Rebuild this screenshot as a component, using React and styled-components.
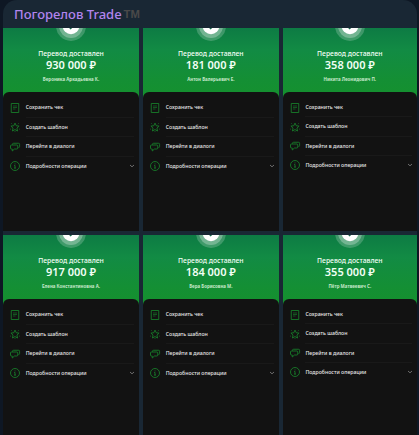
import React from "react";
import styled, { createGlobalStyle } from "styled-components";

const transfers = [
  { amount: "930 000 ₽", name: "Вероника Аркадьевна К." },
  { amount: "181 000 ₽", name: "Антон Валерьевич Е." },
  { amount: "358 000 ₽", name: "Никита Леонидович П.", compact: true },
  { amount: "917 000 ₽", name: "Елена Константиновна А." },
  { amount: "184 000 ₽", name: "Вера Борисовна М." },
  { amount: "355 000 ₽", name: "Пётр Матвеевич С.", compact: true },
];

const ReceiptIcon = () => (
  <Icon viewBox="0 0 20 20">
    <path d="M2.5 1h15v18h-15z" />
    <path d="M6 6h8M6 9h8M6 12h5" strokeWidth="1.2" />
  </Icon>
);

const StarIcon = () => (
  <Icon viewBox="0 0 20 20">
    <path d="M10 2.200l2.500 5.300 5.700.7-4.300 4 1.200 5.800-5.100-2.900L4.900 18l1.200-5.800-4.300-4 5.700-.7z" />
    <path d="M2.500 2.500l1.800 1.800M17.500 2.500l-1.800 1.800M.2 14.500l1.800-.6M19.800 14.500l-1.800-.6M10 18.200v1.800" strokeWidth="1.300" />
  </Icon>
);

const ChatIcon = () => (
  <Icon viewBox="0 0 20 20">
    <path d="M5 5.500V4.500q0-2 2-2h10q2.200 0 2.200 2.200V9q0 2-2.200 2.200" />
    <path d="M3 6h10.500q2 0 2 2v4q0 2-2 2H9l-4.500 4v-4H3q-2 0-2-2V8q0-2 2-2z" />
  </Icon>
);

const InfoIcon = () => (
  <Icon viewBox="0 0 20 20">
    <circle cx="10" cy="10" r="9" />
    <path d="M10 5v1.800M8.300 9H10v5M8 14.200h4" strokeWidth="1.700" />
  </Icon>
);

const actions = [
  { label: "Сохранить чек", icon: ReceiptIcon },
  { label: "Создать шаблон", icon: StarIcon },
  { label: "Перейти в диалоги", icon: ChatIcon },
  { label: "Подробности операции", icon: InfoIcon, expandable: true },
];

const Transfer = ({ amount, name, compact }) => (
  <Card>
    <Hero>
      <Badge viewBox="0 0 30 14">
        <circle cx="15" cy="-2" r="15" fill="#fff" fillOpacity=".2" />
        <circle cx="15" cy="-2" r="12" fill="#fff" fillOpacity=".28" />
        <circle cx="15" cy="-2" r="8.300" fill="#fff" />
        <path d="M12.800-1.500L14.600.5l2-2" fill="none" stroke="#14664a" strokeWidth="1.500" />
      </Badge>
      <Status>Перевод доставлен</Status>
      <Amount>{amount}</Amount>
      <Recipient>{name}</Recipient>
    </Hero>
    <Sheet>
      {actions.map(({ label, icon: ActionIcon, expandable }) => (
        <Action key={label} $compact={compact}>
          <ActionIcon />
          <ActionBody $last={expandable}>
            {label}
            {expandable && (
              <Chevron viewBox="0 0 6 4">
                <path d="M1 1l2 1.800L5 1" />
              </Chevron>
            )}
          </ActionBody>
        </Action>
      ))}
    </Sheet>
  </Card>
);

const App = () => (
  <>
    <GlobalStyle />
    <Message>
      <Header>
        <Sender>Погорелов Trade</Sender>
        <Mark>TM</Mark>
      </Header>
      <Gallery>
        {transfers.map((transfer) => (
          <Transfer key={transfer.amount} {...transfer} />
        ))}
      </Gallery>
    </Message>
  </>
);

const GlobalStyle = createGlobalStyle`
* {
  box-sizing: border-box;
}
body {
  margin: 0;
  background-color: #0e1724;
  font-family: "Noto Sans", "Open Sans", sans-serif;
  overflow: hidden;
}
`

const Message = styled.div`
margin-left: 3px;
width: 414px;
height: 435px;
overflow: hidden;
border-radius: 14px 14px 0 0;
background-color: #192734;
`

const Header = styled.div`
height: 28px;
padding: 4px 0 0 11px;
display: flex;
align-items: flex-start;
`

const Sender = styled.div`
font-size: 13px;
font-weight: 500;
line-height: 20px;
color: #b184ee;
white-space: nowrap;
`

const Mark = styled.div`
margin-left: 2px;
font-family: "Liberation Sans", sans-serif;
font-size: 11.3px;
font-weight: 700;
line-height: 20px;
color: #494949;
`

const Gallery = styled.div`
display: grid;
grid-template-columns: 136px 135.7px 134.3px;
grid-template-rows: 203px 203px;
gap: 4px;
`

const Card = styled.div`
overflow: hidden;
background: linear-gradient(#0d7b44 0, #128b44 22px, #148f34 52px, #15912d 72px, #121212 72px);
`

const Hero = styled.div`
height: 64px;
display: flex;
flex-direction: column;
align-items: center;
color: #f2fff5;
white-space: nowrap;
`

const Badge = styled.svg`
width: 30px;
height: 14px;
flex: none;
`

const Status = styled.div`
margin-top: 7px;
font-size: 6.8px;
font-weight: 500;
line-height: 10px;
`

const Amount = styled.div`
font-size: 11px;
font-weight: 600;
line-height: 12px;
`

const Recipient = styled.div`
margin-top: 5px;
font-size: 4.45px;
font-weight: 700;
line-height: 6px;
color: #c5e8ca;
`

const Sheet = styled.div`
height: 139px;
padding: 6px 5px 0 7px;
border-radius: 6px 6px 0 0;
background-color: #121212;
`

const Action = styled.div`
height: ${props => props.$compact ? "19.25px" : "19.5px"};
display: flex;
align-items: center;
`

const Icon = styled.svg`
width: 10px;
height: 10px;
flex: none;
overflow: visible;
fill: none;
stroke: #18822b;
stroke-width: 1.7;
`

const ActionBody = styled.div`
flex: 1;
height: 100%;
margin-left: 5.7px;
display: flex;
align-items: center;
justify-content: space-between;
font-size: 5.2px;
font-weight: 500;
color: #e6e6e6;
white-space: nowrap;
border-bottom: ${props => props.$last ? "none" : "1px solid #191919"};
`

const Chevron = styled.svg`
width: 6px;
height: 4px;
margin-right: -1px;
fill: none;
stroke: #858585;
stroke-width: 0.8;
`

export default App;
